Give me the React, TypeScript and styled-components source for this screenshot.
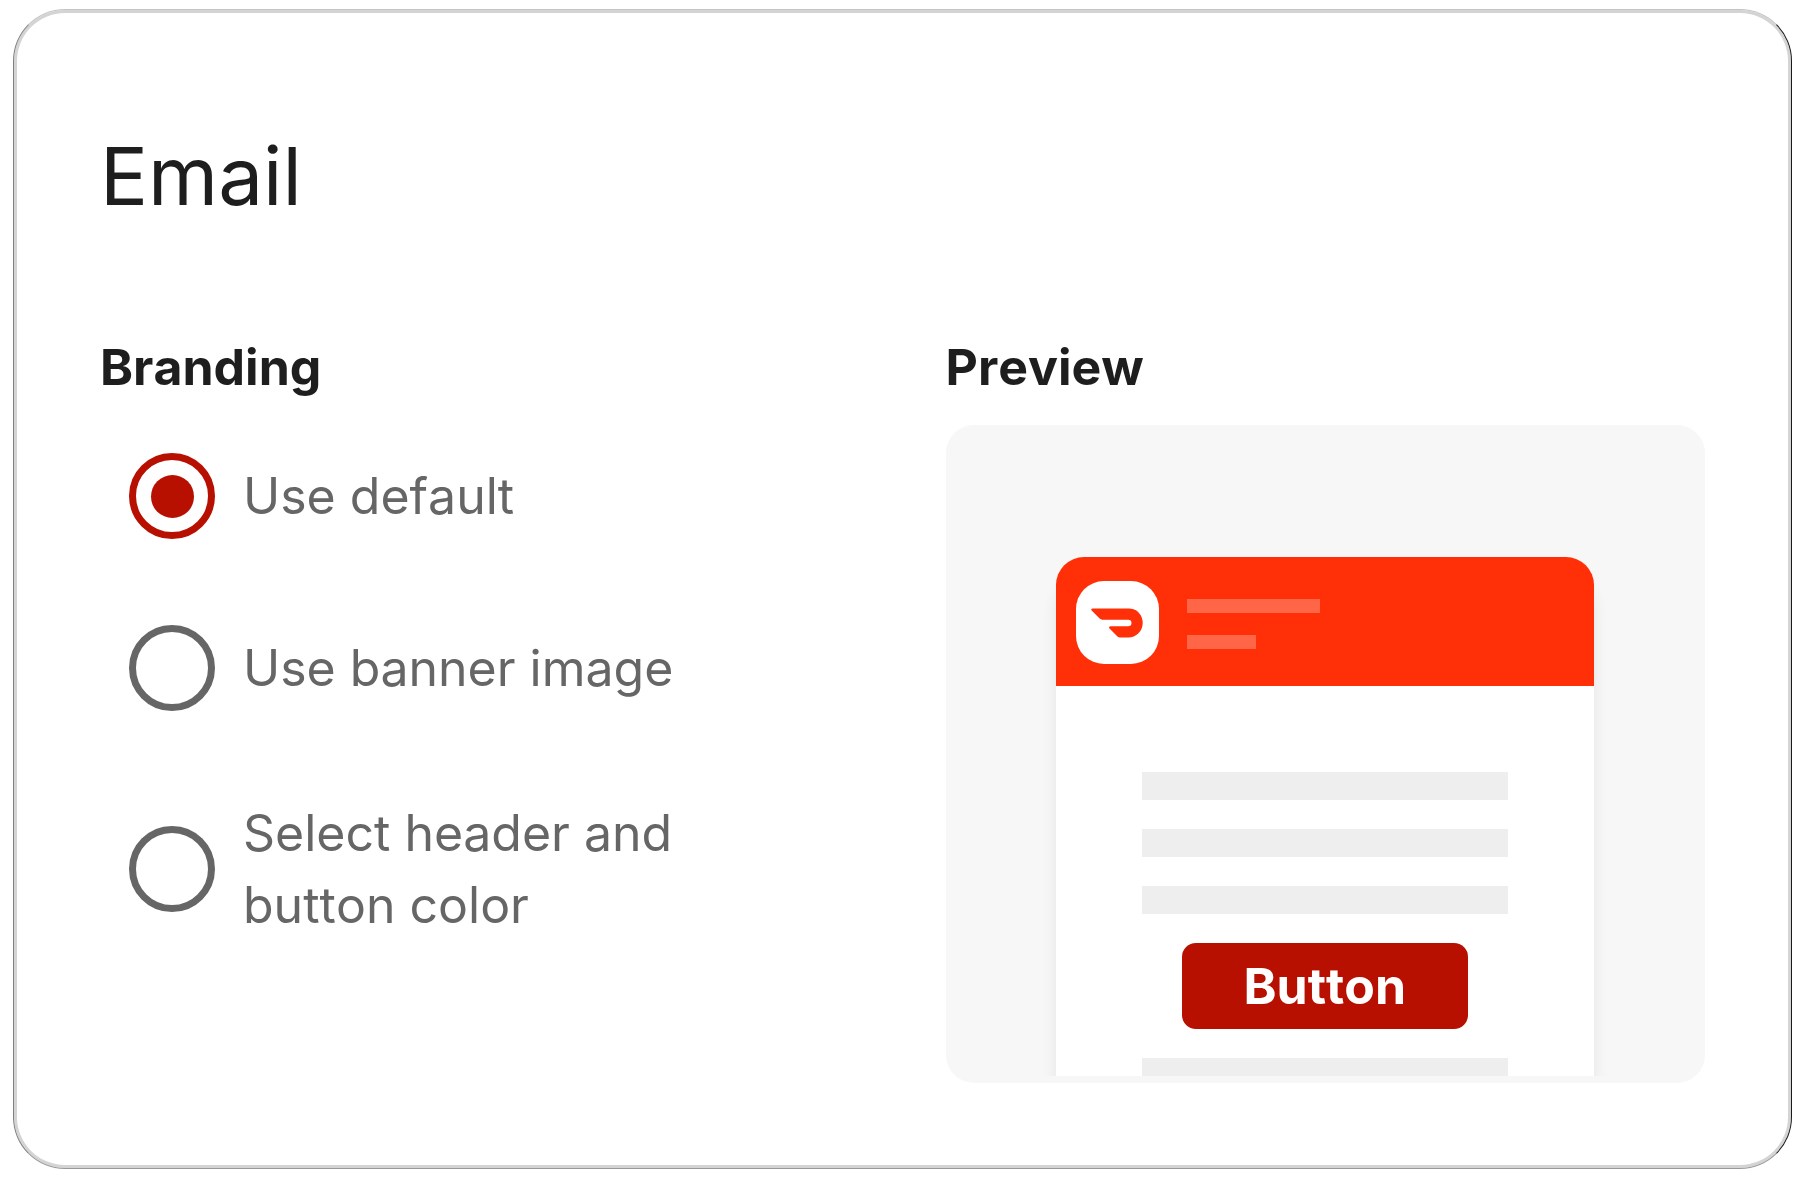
import React, { useState } from "react";
import styled, { createGlobalStyle } from "styled-components";

const GlobalStyle = createGlobalStyle`
  *, *::before, *::after { box-sizing: border-box; }
  body {
    margin: 0;
    background: #fff;
    color: #1e1e1e;
    font-family: Inter, "Liberation Sans", sans-serif;
    font-kerning: none;
  }
`;

const Page = styled.main`
  display: flex;
  min-height: 100vh;
  padding: 9px 14px 10px 13px;
`;

const Card = styled.section`
  flex: 1;
  padding: 116px 86px 85px;
  border: 1px solid;
  border-color: #c4c4c4 #1a1a1a #999 #808080;
  border-radius: 52px;
  box-shadow: inset 0 0 0 3px #d4d4d4;
  background: #fff;
`;

const Title = styled.h1`
  margin: 0 0 109px;
  font-size: 80px;
  font-weight: 400;
  line-height: 100px;
`;

const Columns = styled.div`
  display: grid;
  grid-template-columns: repeat(2, minmax(0, 1fr));
  gap: 86px;
`;

const Branding = styled.fieldset`
  min-width: 0;
  margin: 0;
  padding: 0;
  border: 0;
`;

const Legend = styled.legend`
  padding: 0;
  font-size: 50px;
  font-weight: 700;
  line-height: 64px;
`;

const Heading = styled.h2`
  margin: 0 0 26px;
  font-size: 50px;
  font-weight: 700;
  line-height: 64px;
`;

const Options = styled.div`
  display: flex;
  flex-direction: column;
  gap: 86px;
  padding: 54px 0 0 29px;
`;

const Option = styled.label`
  display: flex;
  align-items: center;
  gap: 28px;
  max-width: 560px;
  color: #666;
  font-size: 50px;
  line-height: 72px;
  cursor: pointer;
`;

const Radio = styled.input`
  display: grid;
  flex: none;
  place-content: center;
  width: 86px;
  height: 86px;
  margin: 0;
  appearance: none;
  border: 7px solid #666;
  border-radius: 50%;

  &:checked {
    border-color: #b71000;
  }

  &:checked::before {
    width: 43px;
    height: 43px;
    border-radius: 50%;
    background: #b71000;
    content: "";
  }
`;

const Panel = styled.div`
  padding-bottom: 7px;
  border-radius: 28px;
  background: #f7f7f7;
`;

const Viewport = styled.div`
  height: 651px;
  padding: 132px 111px 0 110px;
  overflow: hidden;
`;

const Mail = styled.div`
  height: 600px;
  border-radius: 28px;
  background: #fff;
  box-shadow: 0 24px 16px rgba(0, 0, 0, 0.08);
`;

const MailHeader = styled.div`
  display: flex;
  align-items: center;
  gap: 28px;
  height: 129px;
  padding: 2px 20px 0;
  border-radius: 28px 28px 0 0;
  background: #ff3008;
`;

const LogoTile = styled.div`
  display: grid;
  place-items: center;
  width: 83px;
  height: 83px;
  border-radius: 28px;
  background: #fff;
`;

const HeaderLines = styled.div`
  display: grid;
  gap: 22px;
  padding-top: 2px;
`;

const HeaderLine = styled.div<{ $width: number }>`
  width: ${(p) => p.$width}px;
  height: 14px;
  background: #ff6648;
`;

const MailBody = styled.div`
  display: flex;
  flex-direction: column;
  gap: 29px;
  padding: 86px 86px 0;
`;

const TextLine = styled.div`
  height: 28px;
  background: #eee;
`;

const MailButton = styled.button`
  align-self: center;
  width: 286px;
  height: 86px;
  padding: 0;
  border: 0;
  border-radius: 14px;
  background: #b71000;
  color: #fff;
  font-family: inherit;
  font-size: 50px;
  font-weight: 700;
  font-kerning: inherit;
  line-height: 64px;
`;

const choices = [
  { value: "default", label: "Use default" },
  { value: "banner", label: "Use banner image" },
  { value: "color", label: "Select header and button color" },
];

function Logo() {
  return (
    <svg width="52" height="30" viewBox="0 5 24 14" fill="#ff3008" aria-hidden="true">
      <path d="M23.071 8.409a6.09 6.09 0 0 0-5.396-3.228H.584A.589.589 0 0 0 .17 6.184L3.894 9.93a1.752 1.752 0 0 0 1.242.516h12.049a1.554 1.554 0 1 1 .031 3.108H8.91a.589.589 0 0 0-.415 1.003l3.725 3.747a1.75 1.75 0 0 0 1.242.516h3.757c4.887 0 8.584-5.225 5.852-10.413" />
    </svg>
  );
}

export default function App() {
  const [branding, setBranding] = useState("default");

  return (
    <>
      <GlobalStyle />
      <Page>
        <Card>
          <Title>Email</Title>
          <Columns>
            <Branding>
              <Legend>Branding</Legend>
              <Options>
                {choices.map(({ value, label }) => (
                  <Option key={value} htmlFor={`branding-${value}`}>
                    <Radio
                      type="radio"
                      id={`branding-${value}`}
                      name="branding"
                      value={value}
                      checked={branding === value}
                      onChange={() => setBranding(value)}
                    />
                    <span>{label}</span>
                  </Option>
                ))}
              </Options>
            </Branding>
            <section>
              <Heading>Preview</Heading>
              <Panel>
                <Viewport>
                  <Mail>
                    <MailHeader>
                      <LogoTile>
                        <Logo />
                      </LogoTile>
                      <HeaderLines>
                        <HeaderLine $width={133} />
                        <HeaderLine $width={69} />
                      </HeaderLines>
                    </MailHeader>
                    <MailBody>
                      <TextLine />
                      <TextLine />
                      <TextLine />
                      <MailButton type="button">Button</MailButton>
                      <TextLine />
                    </MailBody>
                  </Mail>
                </Viewport>
              </Panel>
            </section>
          </Columns>
        </Card>
      </Page>
    </>
  );
}
